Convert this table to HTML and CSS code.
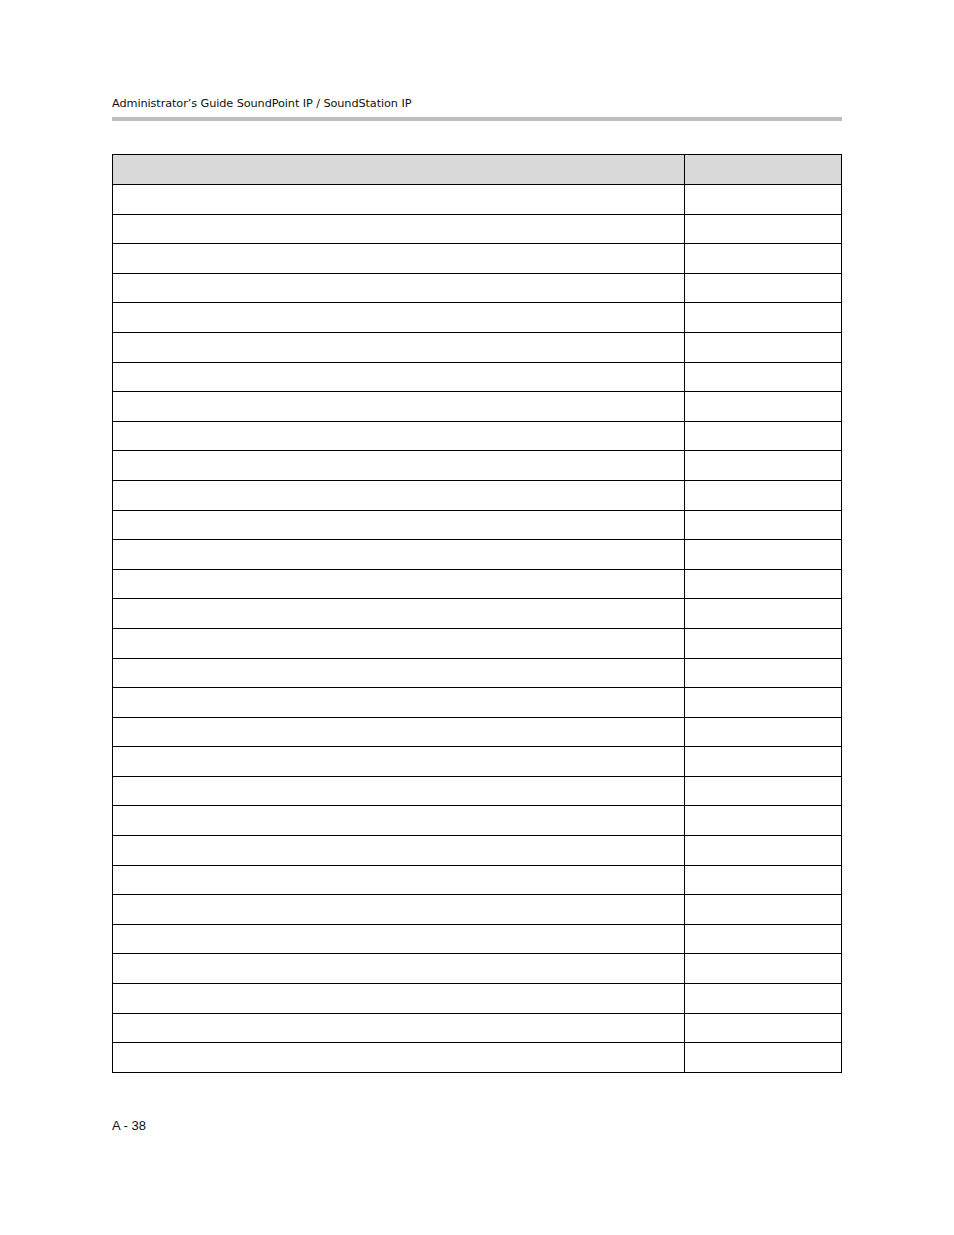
FILE: index.html
```html
<!DOCTYPE html>
<html>
<head>
<meta charset="utf-8">
<link rel="stylesheet" href="styles.css">
</head>
<body>
<div class="page">
  <header class="running-head">
    <div class="title">Administrator’s Guide SoundPoint IP / SoundStation IP</div>
    <div class="rule"></div>
  </header>
  <div class="tbl" id="tbl">
    <div class="row head"><div class="c1"></div><div class="c2"></div></div>
  </div>
  <footer class="folio">A - 38</footer>
</div>
<script src="script.js"></script>
</body>
</html>
```
FILE: script.js
```js
var t = document.getElementById('tbl');
for (var i = 0; i < 30; i++) {
  var r = document.createElement('div');
  r.className = 'row';
  r.innerHTML = '<div class="c1"></div><div class="c2"></div>';
  t.appendChild(r);
}
```
FILE: styles.css
```css
html, body { margin: 0; padding: 0; background: #fff; }
body { width: 954px; height: 1235px; }
.page { padding: 95px 0 0 112px; width: 730px; }
.running-head .title {
  font-family: "DejaVu Sans", "Liberation Sans", sans-serif;
  font-size: 11.3px;
  line-height: 17px;
  color: #111;
  letter-spacing: -0.1px;
}
.rule { height: 4px; background: #bdbdbd; margin-top: 5px; width: 730px; }
.tbl {
  margin-top: 33px;
  width: 728px;
  border: 1px solid #000;
  border-top: 0;
}
.row { display: flex; height: 29.6px; box-sizing: border-box; border-top: 1px solid #000; }
.row.head { background: #d9d9d9; height: 30px; }
.c1 { width: 571px; border-right: 1px solid #000; }
.c2 { flex: 1; }
.folio {
  margin-top: 45px;
  font-family: "Liberation Sans", Arial, sans-serif;
  font-size: 13px;
  color: #111;
}
```
